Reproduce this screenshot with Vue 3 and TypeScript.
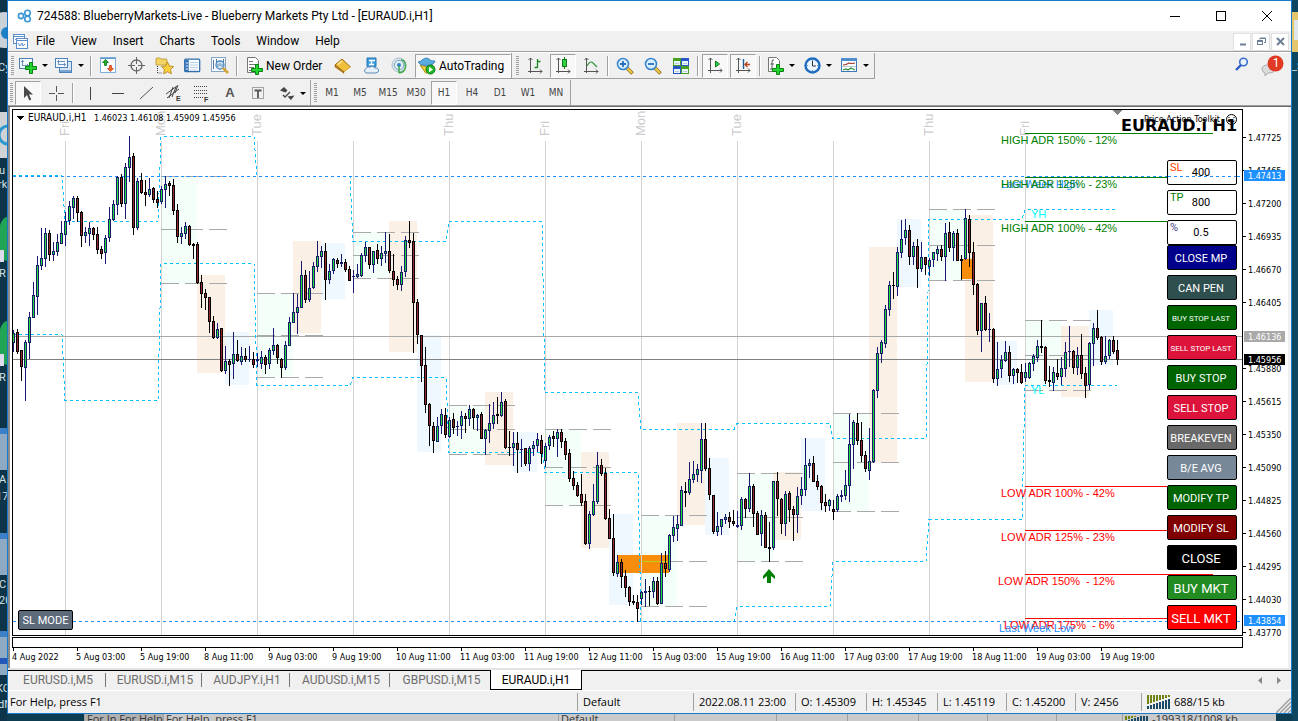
<script setup lang="ts">
interface Candle { x: number; high: number; top: number; bottom: number; low: number; up: boolean }
interface Session { x: number; y: number; w: number; h: number; kind: string }

// One entry per hourly bar: direction, high, body top, body bottom, low (chart units).
const bars = `
u330 333 343 352,d329 332 352 354,d350 350 367 381,u340 342 368 401,u312 317 343 359,u282 295 318 318,u256 265 297 315,u228 258 266 270,
u228 233 259 267,d230 233 255 261,u242 251 255 261,u234 242 252 256,u221 233 244 244,u212 221 235 246,u201 206 221 225,u196 198 208 219,
d196 198 213 222,d211 212 236 247,u227 232 236 243,u222 228 234 246,d227 228 235 240,d227 234 250 254,d246 249 254 259,u235 238 253 264,
u207 219 238 242,u200 204 220 221,u176 177 205 215,d174 177 204 207,u163 167 204 219,u136 157 168 182,d153 156 228 235,u178 181 228 230,
d173 180 193 194,d180 192 195 206,u178 189 195 197,d187 188 200 203,d191 199 203 208,u186 189 202 204,u176 184 190 208,d181 183 186 196,
d179 185 211 215,d204 210 237 243,u227 233 237 244,u222 226 234 239,d225 226 245 246,d243 244 246 259,d242 244 283 284,d275 282 294 308,
d289 293 298 310,d297 297 322 333,d316 321 338 339,u323 329 338 339,d328 328 371 372,u346 361 371 374,d359 361 365 386,u332 354 364 379,
d340 354 361 362,u347 356 362 365,d348 356 360 362,u346 359 360 362,d352 359 365 368,u353 359 361 367,u351 357 364 369,d355 357 365 374,
u348 350 364 369,u328 345 351 355,d344 345 358 364,d358 359 368 378,u341 345 368 370,u317 322 346 346,u293 312 323 323,u294 307 313 334,
u261 275 308 308,d270 275 300 303,u271 288 300 302,u262 266 288 289,u241 256 267 272,u246 251 257 268,d243 251 280 300,u264 271 280 284,
u258 259 271 274,d258 260 264 268,u254 262 264 267,d259 262 270 272,d266 269 281 281,u270 276 277 293,u264 274 277 278,u253 255 276 277,
u242 247 256 262,d247 247 265 269,u251 251 265 273,d244 250 259 264,u246 253 259 266,u232 251 254 263,d234 251 271 273,d254 271 280 286,
d276 279 285 290,u266 272 285 291,u236 240 272 277,d221 240 243 248,d233 241 303 353,d299 302 335 344,d335 335 366 382,d347 365 405 413,
d403 404 426 446,d422 426 441 453,u417 426 442 442,u409 414 426 434,d408 415 435 438,u417 420 437 438,d413 419 428 434,u421 426 427 436,
u411 416 426 439,d413 416 419 433,u405 409 419 426,d408 409 418 429,u414 415 418 431,d412 414 439 439,u429 430 439 455,u404 423 431 443,
u402 415 424 429,d397 414 416 424,u392 402 416 417,d399 401 448 449,d431 447 448 456,u432 443 448 466,d432 443 450 473,u439 449 450 467,
d448 448 464 466,u446 448 464 471,u441 445 449 456,u433 439 446 452,d435 440 454 464,u443 446 461 467,u435 437 446 450,d431 436 439 447,
u429 432 439 457,d429 432 442 448,d438 441 455 460,d449 453 479 482,d471 478 486 490,d482 485 496 497,d474 494 503 506,d494 501 544 545,
u511 514 544 549,u484 501 515 516,u452 465 502 504,d459 465 474 476,d468 473 519 520,d509 518 539 539,d514 538 573 576,u555 562 574 577,
d559 562 577 588,d570 576 588 597,d586 587 602 606,d595 601 603 605,d595 602 609 622,u591 592 599 605,u579 591 593 607,d586 591 592 606,
u577 581 592 598,d577 581 604 605,u553 563 604 604,d551 563 569 577,u534 535 570 572,u516 527 536 542,u515 524 529 541,u486 490 526 526,
d482 491 493 507,u462 479 493 495,u461 474 480 483,u464 469 475 482,u423 439 471 483,d423 439 469 471,d458 468 495 500,d495 495 532 534,
u512 526 532 536,u519 519 527 535,u514 517 520 524,d512 517 522 528,d510 521 524 526,u511 525 527 528,u497 499 526 530,d498 499 509 518,
u473 486 509 512,d484 486 514 527,d511 513 535 535,u510 515 534 546,d512 515 548 548,d522 547 549 562,u481 481 548 550,d472 481 499 516,
d498 499 524 534,u491 494 524 536,d491 493 510 522,d506 509 515 541,u487 496 515 533,u477 489 496 505,u438 465 490 496,u459 463 466 478,
d456 463 482 482,d475 481 487 490,d485 486 503 510,d494 502 506 512,u499 500 506 511,d500 509 512 520,u494 496 510 512,u490 495 497 502,
u470 485 496 500,u414 444 486 502,u420 422 445 469,d413 423 441 445,d422 440 456 462,d451 455 469 472,u428 461 471 480,u389 390 462 463,
u347 353 391 398,u340 342 354 363,u305 309 344 348,u281 285 310 316,d272 285 286 299,u247 252 287 296,u220 239 253 258,u219 230 238 245,
d225 230 257 265,u242 246 257 265,d239 246 269 288,u242 257 269 272,d257 257 265 275,u258 260 267 276,u252 252 260 267,u246 249 254 261,
d245 249 257 261,u223 233 257 281,d222 232 248 252,u231 233 248 261,d229 233 261 261,d255 259 261 280,u209 218 259 260,d215 219 253 267,
d242 252 285 295,d283 284 331 335,u303 303 331 352,d296 303 330 331,u313 329 330 342,d328 329 379 383,u342 369 379 386,u355 360 369 378,
u341 352 361 362,d346 352 376 382,u368 369 376 384,d368 369 373 383,d364 372 383 384,u363 372 378 382,u362 363 378 379,u354 356 364 371,
u340 346 358 362,d320 346 348 353,d346 347 381 384,d366 380 382 387,u367 372 383 391,d359 373 377 380,u357 368 377 385,u342 352 369 377,
u326 351 352 367,d350 351 368 374,u347 355 368 375,d334 355 374 379,d367 373 386 398,u342 343 385 390,u323 328 344 366,d310 328 338 340,
d336 337 362 365,u336 356 362 364,u339 340 356 359,d336 340 352 354,d340 350 360 365`

const candles: Candle[] = bars.trim().split(',').map((raw, i) => {
  const s = raw.trim()
  const [high, top, bottom, low] = s.slice(1).split(' ').map(Number)
  return { x: 13 + i * 4, high, top, bottom, low, up: s[0] === 'u' }
})

// Per trading day: x, asian range, asian mid, european range, american range.
const days = [
  [161, 176, 283, 229, 275, 373, 332, 385],
  [257, 293, 377, 335, 241, 333, 243, 299],
  [353, 232, 278, 255, 221, 352, 335, 452],
  [449, 405, 454, 429, 392, 465, 432, 472],
  [545, 429, 505, 467, 452, 548, 514, 605],
  [641, 515, 606, 561, 423, 525, 458, 535],
  [737, 473, 561, 517, 472, 540, 438, 511],
  [833, 413, 511, 462, 247, 462, 219, 287],
  [929, 209, 280, 245, 215, 382, 341, 385],
  [1025, 320, 390, 355, 326, 397, 310, 365],
]
const sessions: Session[] = days.flatMap(([x, a, b, , c, d, e, f]) => [
  { x, y: a, w: 36, h: b - a, kind: 'asia' },
  { x: x + 36, y: c, w: 28, h: d - c, kind: 'europe' },
  { x: x + 64, y: e, w: 24, h: f - e, kind: 'america' },
])
const ranges = days.flatMap(([x, a, b, m]) => [a, m, b].map((y) => ({ x, y })))

const stepPath = (levels: number[]): string =>
  levels.map((y, i) => {
    const start = i === 0 ? 13 : 65 + (i - 1) * 96
    const end = Math.min(62 + i * 96, 1117)
    return `${i === 0 ? 'M' : 'L'}${start} ${y}.5L${end} ${y}.5`
  }).join('')
const dayHigh = stepPath([175, 221, 136, 176, 241, 221, 392, 429, 423, 438, 219, 209])
const dayLow = stepPath([334, 400, 263, 385, 377, 452, 472, 621, 606, 561, 519, 385])

const dayNames = ['Fri', 'Mon', 'Tue', '', 'Thu', 'Fri', 'Mon', 'Tue', '', 'Thu', 'Fri']
const dayLines = dayNames.map((name, i) => ({ name, x: 65 + i * 96 }))

const prices = ['1.47725', '1.47465', '1.47200', '1.46935', '1.46670', '1.46405', '', '1.45880', '1.45615', '1.45350', '1.45090', '1.44825', '1.44560', '1.44295', '1.44030', '1.43770']
const priceTags = [
  { y: 170, text: '1.47413', kind: 'level' },
  { y: 331, text: '1.46136', kind: 'line' },
  { y: 354, text: '1.45956', kind: 'bid' },
  { y: 615, text: '1.43854', kind: 'level' },
]
const times = ['4 Aug 2022', '5 Aug 03:00', '5 Aug 19:00', '8 Aug 11:00', '9 Aug 03:00', '9 Aug 19:00', '10 Aug 11:00', '11 Aug 03:00', '11 Aug 19:00', '12 Aug 11:00', '15 Aug 03:00', '15 Aug 19:00', '16 Aug 11:00', '17 Aug 03:00', '17 Aug 19:00', '18 Aug 11:00', '19 Aug 03:00', '19 Aug 19:00']

const adr = [
  { y: 133, x: 1001, to: 1213, text: 'HIGH ADR 150% - 12%', kind: 'high' },
  { y: 177, x: 1001, to: 1167, text: 'HIGH ADR 125% - 23%', kind: 'high' },
  { y: 221, x: 1001, to: 1167, text: 'HIGH ADR 100% - 42%', kind: 'high' },
  { y: 486, x: 1001, to: 1167, text: 'LOW ADR 100% - 42%', kind: 'low' },
  { y: 530, x: 1001, to: 1167, text: 'LOW ADR 125% - 23%', kind: 'low' },
  { y: 574, x: 998, to: 1213, text: 'LOW ADR 150%\u00a0 - 12%', kind: 'low' },
  { y: 618, x: 1004, to: 1167, text: 'LOW ADR 175%\u00a0 - 6%', kind: 'low' },
]

const fields = [
  { id: 'sl', label: 'SL', value: '400' },
  { id: 'tp', label: 'TP', value: '800' },
  { id: 'pct', label: '%', value: '0.5' },
]
const actions = [
  { text: 'CLOSE MP', kind: 'navy' },
  { text: 'CAN PEN', kind: 'slate' },
  { text: 'BUY STOP LAST', kind: 'green tiny' },
  { text: 'SELL STOP LAST', kind: 'crimson tiny' },
  { text: 'BUY STOP', kind: 'green' },
  { text: 'SELL STOP', kind: 'crimson' },
  { text: 'BREAKEVEN', kind: 'gray' },
  { text: 'B/E AVG', kind: 'steel' },
  { text: 'MODIFY TP', kind: 'green' },
  { text: 'MODIFY SL', kind: 'maroon' },
  { text: 'CLOSE', kind: 'black large' },
  { text: 'BUY MKT', kind: 'forest large' },
  { text: 'SELL MKT', kind: 'red large' },
]

const menus = ['File', 'View', 'Insert', 'Charts', 'Tools', 'Window', 'Help']
const frames = ['M1', 'M5', 'M15', 'M30', 'H1', 'H4', 'D1', 'W1', 'MN']
const tabs = ['EURUSD.i,M5', 'EURUSD.i,M15', 'AUDJPY.i,H1', 'AUDUSD.i,M15', 'GBPUSD.i,M15', 'EURAUD.i,H1']
const status = ['For Help, press F1', 'Default', '2022.08.11 23:00', 'O: 1.45309', 'H: 1.45345', 'L: 1.45119', 'C: 1.45200', 'V: 2456']
const trafficBars = [0, 1, 2, 3, 4, 5, 6, 7]
</script>

<template>
  <div class="desktop">
    <svg class="edge" width="7" height="721" aria-hidden="true">
      <rect width="7" height="721" fill="#0d3448" />
      <circle cx="4" cy="30" r="18" fill="#c9d2d8" /><circle cx="7" cy="33" r="6" fill="#1d7fc4" />
      <text x="-2" y="71">Cy</text>
      <rect y="112" width="7" height="46" fill="#cfd3d6" /><circle cx="8" cy="135" r="9" fill="none" stroke="#2d9ad0" stroke-width="3" />
      <text x="-1" y="174">u</text><text x="-2" y="188">rk</text>
      <ellipse cx="7" cy="239" rx="9" ry="22" fill="#22a455" /><rect y="250" width="4" height="12" fill="#dde" />
      <text x="-1" y="277">R</text>
      <ellipse cx="7" cy="343" rx="9" ry="22" fill="#22a455" /><rect y="354" width="4" height="12" fill="#dde" />
      <text x="-1" y="381">R</text>
      <rect y="428" width="7" height="42" fill="#8da9c4" /><rect y="428" width="7" height="6" fill="#3d7fc8" />
      <text x="-1" y="483">A</text><text x="-4" y="500">17</text>
      <rect y="533" width="7" height="42" fill="#8da9c4" /><rect y="533" width="7" height="6" fill="#3d7fc8" />
      <text x="-1" y="588">C</text><text x="-1" y="604">20</text>
      <rect y="631" width="7" height="44" fill="#8da9c4" /><rect y="631" width="7" height="6" fill="#3d7fc8" /><rect y="658" width="7" height="6" fill="#2456b8" />
      <text x="-4" y="692">KC</text><text x="-2" y="708">dN</text>
    </svg>

    <main class="window">
      <header class="titlebar">
        <svg width="16" height="14" viewBox="0 0 16 14" fill="none" stroke="#3a97d3" stroke-width="1.6">
          <circle cx="10.5" cy="4" r="2.8" /><circle cx="4" cy="7" r="2.6" /><circle cx="10.5" cy="10" r="2.8" />
        </svg>
        <h1>724588: BlueberryMarkets-Live - Blueberry Markets Pty Ltd - [EURAUD.i,H1]</h1>
        <div class="winbtns">
          <button aria-label="Minimize"><svg width="12" height="12"><path d="M1 6.5h10" stroke="#000" /></svg></button>
          <button aria-label="Maximize"><svg width="12" height="12"><rect x="1.5" y="1.5" width="9" height="9" fill="none" stroke="#000" /></svg></button>
          <button aria-label="Close"><svg width="12" height="12"><path d="M1 1l10 10M11 1L1 11" stroke="#000" /></svg></button>
        </div>
      </header>

      <nav class="menubar">
        <svg class="menulogo" width="15" height="15" viewBox="0 0 15 15" fill="#fff" stroke="#5b8fcb">
          <rect x=".5" y=".5" width="11" height="9" /><path d="M.5 2.500h11M2 6l2-2 2 3 2-2" />
          <rect x="3.500" y="4.500" width="11" height="10" /><path d="M3.500 6.500h11M5 9l2 3 2-3 1 3 2-2" fill="none" />
        </svg>
        <button v-for="m in menus" :key="m">{{ m }}</button>
        <div class="mdi">
          <button aria-label="Minimize chart"><svg width="9" height="9"><path d="M2 7.500h6" stroke="#6d7f94" stroke-width="2" /></svg></button>
          <button aria-label="Restore chart"><svg width="9" height="9" fill="none" stroke="#6d7f94"><path d="M3 2.500V1h5.500v4.500H7M3 1.500h5" /><rect x=".5" y="3.500" width="5" height="4" /><path d="M1 4.500h4" /></svg></button>
          <button aria-label="Close chart"><svg width="9" height="9"><path d="M1 1l7 7M8 1L1 8" stroke="#6d7f94" stroke-width="2" /></svg></button>
        </div>
      </nav>

      <div class="toolrow first">
        <div class="strip">
          <i class="grip"></i>
          <button class="drop" aria-label="New chart">
            <svg width="18" height="17" viewBox="0 0 18 17"><rect x=".5" y="1.500" width="13" height="10" fill="#f4f9ff" stroke="#4c82b8" /><path d="M3.500 3v6M2 4.500h3M3 8.500h7M8.500 7v3" stroke="#6a92b8" fill="none" /><path d="M10.500 5.500h3v4h4v3h-4v4h-3v-4h-4v-3h4z" fill="#22d52c" stroke="#0a7f16" /></svg><b></b>
          </button>
          <button class="drop" aria-label="Profiles">
            <svg width="18" height="17" viewBox="0 0 18 17"><rect x="4.500" y="4.500" width="12" height="11" fill="#d6e6f6" stroke="#4c82b8" /><path d="M5 14h11" stroke="#79a6d3" stroke-width="2" /><rect x=".5" y="1.500" width="12" height="9" fill="#f4f9ff" stroke="#4c82b8" /><path d="M3.500 3v5M2 4.500h8M3 7.500h8M9.500 6v3" stroke="#6a92b8" fill="none" /></svg><b></b>
          </button>
          <i class="sep"></i>
          <button class="tool" aria-label="Market Watch"><svg width="17" height="17" viewBox="0 0 17 17"><rect x=".5" y=".5" width="15" height="15" fill="#fdfeff" stroke="#7fb0dc" /><path d="M1 1.500h14" stroke="#5a96d0" /><path d="M5.500 2.500l3 3h-2v3h-2v-3h-2z" fill="#1fae2a" stroke="#0d7a18" stroke-width=".8" /><path d="M10.500 14.500l3-3h-2v-3h-2v3h-2z" fill="#f2622b" stroke="#d04510" stroke-width=".8" /></svg></button>
          <button class="tool" aria-label="Data Window"><svg width="17" height="17" viewBox="0 0 17 17" fill="none" stroke="#666" stroke-width="1.3"><circle cx="8.500" cy="8.500" r="5.500" /><path d="M8.500 0v7M8.500 10v7M0 8.500h7M10 8.500h7" stroke-width="1" /></svg></button>
          <button class="tool" aria-label="Navigator"><svg width="19" height="18" viewBox="0 0 19 18"><path d="M1 2q0-1 1-1h3l1 1h5q1 0 1 1v5H1z" fill="#f3d565" stroke="#b8932b" stroke-width=".8" /><path d="M2.500 9v7h4" stroke="#444" stroke-dasharray="1 1" fill="none" /><path d="M12.500 5l1.900 4 4.200.5-3 3 .8 4.300-3.900-2-3.900 2 .8-4.300-3-3 4.200-.5z" fill="#f9cf3e" stroke="#b07e13" stroke-width=".8" /></svg></button>
          <button class="tool" aria-label="Terminal"><svg width="17" height="16" viewBox="0 0 17 16"><rect x=".7" y="1.200" width="15" height="12.500" rx="1" fill="#fafdff" stroke="#2f6eac" stroke-width="1.300" /><rect x="1.200" y="2" width="3.500" height="11" fill="#2d6fb4" /><path d="M2 5h2M2 8h2M2 11h2" stroke="#fff" /><path d="M6 4.500h8M6 7h8M6 9.500h8M6 12h8" stroke="#a7c2dd" stroke-width=".8" /></svg></button>
          <button class="tool" aria-label="Strategy Tester"><svg width="18" height="18" viewBox="0 0 18 18"><rect x=".5" y=".5" width="14" height="14" fill="#f5f9fd" stroke="#87a5c4" /><path d="M2.500 3v9M5.500 2v7M12.500 2v7" stroke="#5d7890" /><circle cx="9" cy="8" r="4" fill="#cfe5f8" fill-opacity=".9" stroke="#4a88c2" stroke-width="1.300" /><path d="M7 10V7M9 9V6M11 10V7" stroke="#4a7299" stroke-width=".8" /><path d="M12 11l5 5" stroke="#d8a42e" stroke-width="2.500" /></svg></button>
          <i class="sep"></i>
          <button class="order"><svg width="17" height="18" viewBox="0 0 17 18"><path d="M1.500.5h8l3 3v12h-11z" fill="#fff" stroke="#777" /><path d="M3 4.500h4M3 7.500h7M3 10.500h5M3 13.500h3" stroke="#777" /><path d="M9.500 7.500h3v4h4v3h-4v3h-3v-3h-4v-3h4z" fill="#24d52f" stroke="#0a7f16" /></svg>New Order</button>
          <button class="tool" aria-label="MetaEditor"><svg width="18" height="16" viewBox="0 0 18 16"><path d="M1 7l7-6 8.500 8-6.500 5z" fill="#f0bf3c" stroke="#a36b10" /><path d="M1 7v2l9 6.300V14z" fill="#c98a1b" stroke="#8a590c" stroke-width=".6" /><path d="M10 15.300l6.500-5V9L10 14z" fill="#fff3c7" /><path d="M4 6.500l4-3.500" stroke="#fff0ad" stroke-width="1.400" /></svg></button>
          <button class="tool" aria-label="Options"><svg width="17" height="17" viewBox="0 0 17 17"><path d="M4 1h9v8q0 1-1 1H5q-1 0-1-1z" fill="#3c9ee0" stroke="#2272b0" /><path d="M6 3.500h6M8.500 3v5M6 7.500h5" stroke="#fff" stroke-width="1.300" /><path d="M2 15q-1.500-2 1-3.500 1-2.500 4-1.500 3-2 5 1 4 0 3.500 3-.5 2-3 2H4q-1.500 0-2-1z" fill="#e6f0fa" stroke="#5b87b5" /></svg></button>
          <button class="tool" aria-label="Signals"><svg width="17" height="17" viewBox="0 0 17 17" fill="none"><circle cx="8" cy="8" r="7" stroke="#a9bccb" fill="#e2ecf2" /><circle cx="8" cy="8" r="4.800" stroke="#6fa5c2" /><circle cx="8" cy="8" r="2" fill="#2d86c8" /><path d="M8 16V9M8 16q7-1 6.500-8Q14 3 10 3" stroke="#48ab52" stroke-width="1.600" /></svg></button>
          <button class="auto pressed"><svg width="18" height="18" viewBox="0 0 18 18"><path d="M2 8l7 2 6-2-3 6-4 2.500z" fill="#f4cf3a" stroke="#b28a1a" /><path d="M0 5q4-1 4-2 5-4 8 0 1 1 5 1-1 4-8 4.500Q2 8.500 0 5z" fill="#5aabe0" stroke="#2b78ae" stroke-width=".8" /><circle cx="12.500" cy="12.500" r="4.500" fill="#1fb52a" stroke="#0c7c18" /><path d="M11 9.800v5.400l4-2.700z" fill="#fff" /></svg>AutoTrading</button>
          <i class="endline"></i>
          <i class="grip second"></i>
          <button class="tool" aria-label="Bar chart"><svg width="17" height="17" viewBox="0 0 17 17" fill="none"><path d="M3.500 1v15M1 14.500h14M1.500 3l2-2 2 2M13 12.500l2 2-2 2" stroke="#555" /><path d="M10.500 2v9M7.500 10.500h3M10.500 4.500h3" stroke="#1c8a26" stroke-width="1.300" /></svg></button>
          <button class="tool pressed" aria-label="Candlesticks"><svg width="17" height="17" viewBox="0 0 17 17" fill="none"><path d="M3.500 1v15M1 14.500h14M1.500 3l2-2 2 2M13 12.500l2 2-2 2" stroke="#555" /><path d="M9.500 0v12" stroke="#0f7a1a" /><rect x="7.500" y="2.500" width="4" height="7" fill="#35d143" stroke="#0f7a1a" /></svg></button>
          <button class="tool" aria-label="Line chart"><svg width="17" height="17" viewBox="0 0 17 17" fill="none"><path d="M3.500 1v15M1 14.500h14M1.500 3l2-2 2 2M13 12.500l2 2-2 2" stroke="#555" /><path d="M4 9q3-6 6-3l4 4" stroke="#35983d" stroke-width="1.200" /></svg></button>
          <i class="sep"></i>
          <button class="tool" aria-label="Zoom in"><svg width="18" height="18" viewBox="0 0 18 18"><path d="M10.500 10.500l6 6" stroke="#8d6b15" stroke-width="3.600" /><path d="M10.500 10.500l5.500 5.500" stroke="#efc84a" stroke-width="2.200" /><circle cx="7" cy="7" r="5.500" fill="#d9efff" stroke="#3a86cc" stroke-width="1.600" /><path d="M4 7h6M7 4v6" stroke="#2871ba" stroke-width="1.800" /></svg></button>
          <button class="tool" aria-label="Zoom out"><svg width="18" height="18" viewBox="0 0 18 18"><path d="M10.500 10.500l6 6" stroke="#8d6b15" stroke-width="3.600" /><path d="M10.500 10.500l5.500 5.500" stroke="#efc84a" stroke-width="2.200" /><circle cx="7" cy="7" r="5.500" fill="#d9efff" stroke="#3a86cc" stroke-width="1.600" /><path d="M4 7h6" stroke="#2871ba" stroke-width="1.800" /></svg></button>
          <button class="tool" aria-label="Tile windows"><svg width="16" height="16" viewBox="0 0 16 16" shape-rendering="crispEdges"><rect width="8" height="8" fill="#47a01f" /><rect x="8" width="8" height="8" fill="#2a55c8" /><rect y="8" width="8" height="8" fill="#2a55c8" /><rect x="8" y="8" width="8" height="8" fill="#47a01f" /><path d="M1 5h6M9 5h6M1 13h6M9 13h6" stroke="#e9f4fb" stroke-width="4" /><path d="M2 5.500h4M10 5.500h4M2 13.500h4M10 13.500h4" stroke="#b4cbdc" /></svg></button>
          <i class="sep"></i>
          <button class="tool pressed" aria-label="Auto scroll"><svg width="17" height="17" viewBox="0 0 17 17" fill="none"><path d="M3.500 1v15M1 13.500h14M1.500 3l2-2 2 2M13 11.500l2 2-2 2" stroke="#555" /><path d="M8.500 4v6l4-3z" fill="#35d143" stroke="#0f7a1a" /></svg></button>
          <button class="tool pressed" aria-label="Chart shift"><svg width="17" height="17" viewBox="0 0 17 17" fill="none"><path d="M3.500 1v15M1 13.500h14M1.500 3l2-2 2 2M13 11.500l2 2-2 2" stroke="#555" /><path d="M8.500 2v10" stroke="#1d5f95" stroke-width="1.400" /><path d="M10 7.500h5M12.500 5L10 7.500l2.500 2.500" stroke="#b8421a" stroke-width="1.300" /></svg></button>
          <i class="sep"></i>
          <button class="drop wide" aria-label="Indicators"><svg width="17" height="18" viewBox="0 0 17 18"><path d="M1.500.5h8l3 3v11h-11z" fill="#fff" stroke="#777" /><path d="M7 3q-2-1-2 2v6q0 2-2 1M3.500 7H7" stroke="#555" fill="none" /><path d="M9.500 7.500h3v4h4v3h-4v3h-3v-3h-4v-3h4z" fill="#24d52f" stroke="#0a7f16" /></svg><b></b></button>
          <button class="drop wide" aria-label="Periods"><svg width="17" height="17" viewBox="0 0 17 17"><circle cx="8.500" cy="8.500" r="7" fill="#eaf5ff" stroke="#1d6cc0" stroke-width="2.400" /><path d="M8.500 4v5h3.500" stroke="#333" fill="none" /><path d="M8.500 3v1M8.500 13v1M3 8.500h1M13 8.500h1" stroke="#69a" /></svg><b></b></button>
          <button class="drop wide" aria-label="Templates"><svg width="17" height="17" viewBox="0 0 17 17"><rect x=".5" y="1.500" width="15" height="13" fill="#fbfdff" stroke="#3f78b4" /><rect y="1" width="16" height="3" fill="#4f8fd0" /><path d="M2 8l3-.5L8 6l3 .5L14 6" stroke="#a12d1c" fill="none" stroke-width="1.200" /><path d="M1 9.500h14" stroke="#9ab" stroke-width=".6" /><path d="M2 13l3-1 2 1 3-2 4 2" stroke="#2f9338" fill="none" stroke-width="1.200" /></svg><b></b></button>
        </div>
        <div class="right">
          <button aria-label="Search"><svg width="14" height="14" viewBox="0 0 14 14" fill="none"><circle cx="8.500" cy="5" r="3.800" stroke="#3a6fd0" stroke-width="1.600" fill="#eaf2ff" /><path d="M6 8l-5 5" stroke="#2a5cc4" stroke-width="2.400" /></svg></button>
          <button class="chat" aria-label="Messages"><svg width="23" height="22" viewBox="0 0 23 22"><path d="M1 14q0-4 6-4t7 4q0 4-7 4l-3 3v-3q-3-1-3-4z" fill="#dcdcdc" stroke="#aaa" /><circle cx="14.500" cy="8.500" r="8" fill="#e03a24" /></svg><span>1</span></button>
        </div>
      </div>

      <div class="toolrow second">
        <div class="strip">
          <i class="grip"></i>
          <button class="tool pressed" aria-label="Cursor"><svg width="10" height="15" viewBox="0 0 10 15"><path d="M1 0v12l3-3 2.300 5.500 2-1L6 8.500h4z" fill="#4a4a4a" /></svg></button>
          <button class="tool" aria-label="Crosshair"><svg width="15" height="15"><path d="M7.500 0v6M7.500 9v6M0 7.500h6M9 7.500h6" stroke="#555" /></svg></button>
          <i class="sep"></i>
          <button class="tool" aria-label="Vertical line"><svg width="15" height="13"><path d="M7.500 0v13" stroke="#444" /></svg></button>
          <button class="tool" aria-label="Horizontal line"><svg width="13" height="13"><path d="M0 6.500h12" stroke="#444" /></svg></button>
          <button class="tool" aria-label="Trendline"><svg width="13" height="13"><path d="M0 12L13 0" stroke="#555" /></svg></button>
          <button class="tool" aria-label="Equidistant channel"><svg width="16" height="16"><path d="M0 9L11 1M1 13L13 4M3 13L7 2M6 12l4-10M9 8l3-8" stroke="#444" /><text x="10" y="16">E</text></svg></button>
          <button class="tool" aria-label="Fibonacci"><svg width="16" height="17"><path d="M0 1.500h14M0 5.500h14M0 8.500h14M0 12.500h9" stroke="#444" stroke-dasharray="1 1" /><text x="10" y="17">F</text></svg></button>
          <button class="tool glyph" aria-label="Text">A</button>
          <button class="tool" aria-label="Text label"><svg width="14" height="14"><rect x="1.500" y="1.500" width="11" height="11" fill="none" stroke="#555" stroke-dasharray="1 1" /><path d="M3.500 4.500h7M7 4v8" stroke="#555" stroke-width="1.800" /></svg></button>
          <button class="drop arrows" aria-label="Arrows"><svg width="15" height="13" viewBox="0 0 15 13"><path d="M4 0l3.500 3.500L5.500 5.500 0 3.500zM14.500 8.500L11 13 7.500 9.500z" fill="#444" /><path d="M3 8l2 2 5-5" stroke="#444" fill="none" stroke-width="1.300" /></svg><b></b></button>
          <i class="endline"></i>
          <i class="grip"></i>
          <button v-for="f in frames" :key="f" class="tool frame" :class="{ pressed: f === 'H1' }">{{ f }}</button>
          <i class="endline"></i>
        </div>
      </div>

      <section class="chart">
        <svg class="plot" viewBox="10 107 1278 561" preserveAspectRatio="xMinYMin meet" shape-rendering="crispEdges">
          <rect v-for="(s, i) in sessions" :key="'s' + i" :x="s.x" :y="s.y" :width="s.w" :height="s.h" :class="s.kind" />
          <rect x="617" y="555" width="52" height="18" class="zone" />
          <rect x="961" y="259" width="12" height="20" class="zone" />
          <g class="daynames">
            <text v-for="d in dayLines" :key="d.x" :transform="`translate(${d.x + 4} 136) rotate(-90)`">{{ d.name }}</text>
          </g>
          <rect v-for="d in dayLines" :key="'l' + d.x" :x="d.x" y="141" width="1" height="494" fill="#d3d3d3" />
          <line v-for="(r, i) in ranges" :key="'r' + i" :x1="r.x" :x2="r.x + 66" :y1="r.y + 0.5" :y2="r.y + 0.5" class="range" />
          <path d="M641 561.5h28" stroke="#b4d21e" />
          <path d="M13 336.5h1229" stroke="#a9a9a9" /><path d="M13 359.500h1229" stroke="#808080" />
          <path :d="dayHigh" class="steps" /><path :d="dayLow" class="steps" />
          <path d="M13 176.500h1229M13 621.500h1229" class="weekly" />
          <g v-for="c in candles" :key="c.x" :class="c.up ? 'bull' : 'bear'">
            <rect :x="c.x" :y="c.high" width="1" :height="c.low - c.high" />
            <rect :x="c.x - 1" :y="c.top" width="3" :height="c.bottom - c.top" />
            <rect v-if="c.bottom - c.top > 2" :x="c.x" :y="c.top + 1" width="1" :height="c.bottom - c.top - 2" class="core" />
          </g>
          <path d="M769 569l6 7v3l-4-3v7h-4v-7l-4 3v-3z" fill="#008000" shape-rendering="auto" />
          <g class="notes">
            <text x="1001" y="188" class="week">Last Week High</text>
            <g v-for="a in adr" :key="a.y" :class="a.kind">
              <rect x="1025" :y="a.y" :width="a.to - 1025" height="1" />
              <text :x="a.x" :y="a.y + 11">{{ a.text }}</text>
            </g>
            <text x="999" y="632" class="week">Last Week Low</text>
            <text x="1031" y="218" class="pivot">YH</text><text x="1031" y="394" class="pivot">YL</text>
          </g>
          <path d="M1113 110h9l-4.500 5z" fill="#808080" />
          <path d="M1242.500 110v525M12.500 109.500h1230M12.500 109v526M12 635.500h1231M12.500 637.500h1230v10h-1230z" stroke="#000" fill="none" />
          <path d="M16 116h8l-4 4z" />
          <g class="small">
            <text x="28" y="121" class="head">EURAUD.i,H1</text>
            <text x="94" y="121">1.46023 1.46108 1.45909 1.45956</text>
            <text x="1144" y="122">Price Action Toolkit</text>
            <g v-for="(p, i) in prices" :key="'p' + i">
              <template v-if="p"><rect x="1243" :y="137 + i * 33" width="3" height="1" /><text x="1248" :y="141 + i * 33">{{ p }}</text></template>
            </g>
            <g v-for="t in priceTags" :key="t.y" :class="'tag ' + t.kind"><rect x="1244" :y="t.y" width="41" height="11" /><text x="1248" :y="t.y + 9">{{ t.text }}</text></g>
            <g v-for="(t, i) in times" :key="t"><rect :x="13 + i * 64" y="648" width="1" height="3" /><text :x="12 + i * 64" y="660">{{ t }}</text></g>
          </g>
          <text x="1121" y="131" class="symbol">EURAUD.i H1</text>
          <g shape-rendering="auto" fill="none" stroke="#000"><circle cx="1231.500" cy="119.500" r="5" /><path d="M1229 118v-1M1234 118v-1M1228.500 121q3 2.500 6 0" /></g>
        </svg>

        <form class="panel" @submit.prevent>
          <div v-for="f in fields" :key="f.id" class="field" :class="f.id"><label :for="f.id">{{ f.label }}</label><input :id="f.id" type="text" :value="f.value" /></div>
          <button v-for="a in actions" :key="a.text" type="button" :class="a.kind">{{ a.text }}</button>
        </form>
        <button class="slmode">SL MODE</button>
      </section>

      <nav class="tabs">
        <button v-for="t in tabs" :key="t" :class="{ active: t === 'EURAUD.i,H1' }">{{ t }}</button>
        <div class="scrollers">
          <button aria-label="Scroll left"><svg width="4" height="7"><path d="M4 0v7L0 3.500z" fill="#888" /></svg></button>
          <button aria-label="Scroll right"><svg width="4" height="7"><path d="M0 0v7l4-3.500z" fill="#888" /></svg></button>
        </div>
      </nav>

      <footer class="status">
        <span v-for="s in status" :key="s">{{ s }}</span>
        <span class="traffic">
          <svg width="24" height="14" shape-rendering="crispEdges"><g v-for="b in trafficBars" :key="b"><rect :x="b * 3" y="0" width="2" :height="9 - b" fill="#6f8410" /><rect :x="b * 3" :y="11 - b" width="2" :height="3 + b" fill="#1b4a66" /></g></svg>
          688/15 kb
        </span>
        <svg class="resize" width="15" height="15"><path d="M0 15L15 0M4 15L15 4M8 15l7-7M12 15l3-3" stroke="#a0a0a0" stroke-width="1.500" /></svg>
      </footer>
    </main>

    <svg class="edge" width="6" height="721" aria-hidden="true">
      <rect width="6" height="721" fill="#0d465e" /><rect y="12" width="6" height="40" fill="#e3c66b" /><rect x="2" y="20" width="4" height="20" fill="#dfe7ea" /><text x="0" y="70">_S</text>
    </svg>

    <div class="behind" aria-hidden="true">
      <span class="dim">For In For Help,</span><span>For Help, press F1</span><span>Default</span><span></span><span></span><span></span><span></span><span></span><span></span>
      <span><svg width="24" height="7" shape-rendering="crispEdges"><g v-for="b in trafficBars" :key="b"><rect :x="b * 3" y="0" width="2" :height="Math.max(0, 4 - b)" fill="#6f8410" /><rect :x="b * 3" :y="Math.max(0, 5 - b)" width="2" height="7" fill="#1b4a66" /></g></svg>-199318/1008 kb</span>
    </div>
  </div>
</template>

<style>
html, body { margin: 0; background: #0d3b50; }
</style>

<style scoped>
.desktop { display: grid; grid-template-columns: 7px minmax(0, 1fr) 6px; grid-template-rows: minmax(0, 1fr) 7px; height: 100vh; overflow: hidden; background: #0d3b50; font: 12px/16px Roboto, "Open Sans", sans-serif; color: #000; }
.edge { grid-row: 1 / 3; font-size: 11px; fill: #d5e0e6; }
.desktop > .edge:first-child { grid-column: 1; }
button { font: inherit; color: inherit; background: none; border: 0; padding: 0; margin: 0; border-radius: 0; white-space: nowrap; }
.window { grid-column: 2; grid-row: 1; display: flex; flex-direction: column; border: 1px solid #1979ca; background: #f0f0f0; min-height: 0; box-sizing: border-box; }

.titlebar { flex: none; display: flex; align-items: center; height: 30px; background: #fff; padding-left: 9px; }
.titlebar h1 { margin: 0 0 0 4px; font-size: 12px; font-weight: 400; flex: 1; white-space: nowrap; }
.winbtns { display: flex; height: 100%; }
.winbtns button { width: 46px; display: grid; place-items: center; padding: 0 2px 1px 0; }

.menubar { flex: none; display: flex; align-items: center; height: 22px; box-sizing: border-box; border-bottom: 1px solid #fff; box-shadow: inset 0 -1px #a0a0a0; padding-left: 5px; }
.menubar > button { padding: 0 8px 1px; }
.mdi { margin-left: auto; display: flex; gap: 1px; padding-right: 2px; }
.mdi button { width: 18px; height: 18px; box-sizing: border-box; border: 1px solid #e0e0e0; background: #fff; display: grid; place-items: center; }

.toolrow { flex: none; display: flex; justify-content: space-between; }
.toolrow.first { height: 26px; }
.toolrow.second { height: 28px; box-sizing: border-box; border-bottom: 1px solid #696969; box-shadow: inset 0 -1px #a0a0a0; }
.strip { display: flex; align-items: center; box-sizing: border-box; }
.first .strip { border-bottom: 1px solid #a0a0a0; border-right: 1px solid #a0a0a0; }
.second .strip { padding-top: 1px; }
.grip { flex: none; width: 8px; height: 20px; background: repeating-linear-gradient(#a0a0a0 0 1px, transparent 1px 2px) 3px 0 / 3px 100% no-repeat; }
.grip.second { margin-left: 1px; }
.second .grip { width: 6px; background-position: 2px 0; }
.endline + .grip { margin-left: 1px; }
.sep { flex: none; width: 1px; height: 20px; margin: 0 2px; background: #a0a0a0; border-right: 1px solid #fff; }
.endline { flex: none; align-self: stretch; width: 1px; background: #a0a0a0; }
.tool { flex: none; width: 26px; height: 24px; margin: 0 1px; box-sizing: border-box; display: grid; place-items: center; }
.pressed { border: 1px solid; border-color: #a0a0a0 #fff #fff #a0a0a0; background: #f8f8f8; }
.drop { flex: none; width: 36px; height: 24px; display: flex; align-items: center; gap: 5px; padding-left: 3px; }
.drop.wide { width: 37px; padding-left: 4px; }
.drop.arrows { width: 38px; padding-left: 8px; }
.drop b { width: 0; height: 0; border: 3px solid transparent; border-top-color: #000; border-bottom: 0; }
.order { width: 89px; height: 24px; padding-left: 6px; display: flex; align-items: center; gap: 3px; }
.auto { width: 96px; height: 24px; margin-left: 2px; box-sizing: border-box; display: flex; align-items: center; gap: 3px; padding-left: 2px; }
.glyph { font: bold 13px/16px "Liberation Sans", sans-serif; color: #555; }
.frame { font: 10px/16px "DejaVu Sans Condensed", sans-serif; color: #444; }
.tool text { font: bold 7px "Liberation Sans", sans-serif; fill: #333; }
.right { display: flex; align-items: center; gap: 12px; padding-right: 7px; }
.chat { position: relative; display: flex; }
.chat span { position: absolute; right: 0; top: 0; width: 16px; text-align: center; color: #fff; }

.chart { flex: 1; min-height: 0; position: relative; background: #fff; border-left: 2px solid #8a8a8a; border-right: 3px solid #f0f0f0; }
.plot { display: block; width: 100%; height: 100%; }
.asia { fill: #f5fffa; }
.europe { fill: #faf0e6; }
.america { fill: #f0f8ff; }
.zone { fill: #f78d0a; }
.range { stroke: #a9a9a9; stroke-dasharray: 18 6; }
.steps { fill: none; stroke: #00bfff; stroke-dasharray: 3 3; }
.weekly { stroke: #1e90ff; stroke-dasharray: 3 3; }
.bull { fill: #191970; }
.bear { fill: #000; }
.bull .core { fill: #20e038; }
.bear .core { fill: #962828; }
.daynames { font: 13px "Liberation Sans", sans-serif; fill: #ccc; }
.notes { font: 11px "Liberation Sans", sans-serif; }
.high { fill: #008000; }
.low { fill: #f00; }
.week { fill: #1e90ff; }
.pivot { fill: #0ff; }
.small { font: 9px "DejaVu Sans Condensed", sans-serif; }
.small .head { font-size: 10px; }
.tag text { fill: #fff; }
.tag.level rect { fill: #1e90ff; }
.tag.line rect { fill: #a9a9a9; }
.symbol { font: bold 16px "DejaVu Sans", sans-serif; }

.panel { position: absolute; top: 53px; right: 51px; width: 70px; display: flex; flex-direction: column; gap: 5px; font: 11px/13px Roboto, "Liberation Sans", sans-serif; }
.field { position: relative; height: 25px; }
.field label { position: absolute; left: 3px; top: 1px; color: #ff4500; }
.field.tp label { color: #008000; }
.field.pct label { color: #483d8b; }
.field input { width: 70px; height: 25px; box-sizing: border-box; border: 1px solid #000; border-radius: 2px; background: #fff; padding: 0 2px 0 0; text-align: center; font: 11px/13px Roboto, sans-serif; color: #000; }
.field.sl input { background: #fff repeating-linear-gradient(90deg, #1e90ff 0 3px, transparent 3px 6px) 0 15px / 100% 1px no-repeat; }
.panel button { height: 25px; box-sizing: border-box; border: 1px solid #000; border-radius: 2px; color: #fff; padding: 1px 2px 0 0; }
.panel .navy { background: #00008b; margin-top: -5px; }
.panel .slate { background: #2f4f4f; }
.panel .green { background: #006400; }
.panel .crimson { background: #dc143c; }
.panel .gray { background: #696969; }
.panel .steel { background: #778899; }
.panel .maroon { background: #800000; }
.panel .black { background: #000; }
.panel .forest { background: #228b22; }
.panel .red { background: #f00; }
.panel .tiny { font-size: 8px; }
.panel .large { font-size: 13px; }
.slmode { position: absolute; left: 8px; bottom: 38px; width: 55px; height: 20px; border: 1px solid #000; border-radius: 2px; background: #5c6a7a; color: #fff; font: 11px/13px Roboto, "Liberation Sans", sans-serif; }

.tabs { flex: none; height: 23px; box-sizing: border-box; display: grid; grid-template-columns: 98px 96px 88px 100px 100px 92px 1fr; border-top: 2px solid #e3e3e3; box-shadow: inset 0 1px #000, inset 0 -1px #fff; color: #6d6d6d; }
.tabs > button { height: 14px; margin-top: 3px; line-height: 14px; border-right: 1px solid #777; padding-left: 3px; }
.tabs > button:nth-child(5) { border-right: 0; }
.tabs > button.active { margin: 0; padding: 0; height: 20px; border: 1px solid #000; border-top: 0; background: #fff; color: #000; }
.scrollers { display: flex; gap: 15px; justify-content: flex-end; align-items: center; padding-right: 10px; }
.scrollers button { display: flex; }

.status { flex: none; height: 22px; display: grid; grid-template-columns: 1fr 116px 102px 71px 71px 69px 69px 66px 150px; align-items: center; position: relative; white-space: nowrap; font: 11px/18px "Open Sans", sans-serif; }
.status span { border-left: 1px solid #a0a0a0; padding-left: 5px; line-height: 18px; }
.status span:first-child { border-left: 0; padding-left: 2px; }
.traffic { display: flex; align-items: center; gap: 3px; }
.resize { position: absolute; right: 0; bottom: 0; }

.behind { grid-column: 2; grid-row: 2; margin: 0 16px 0 77px; background: #cacaca; display: grid; grid-template-columns: 79px 395px 116px 102px 71px 71px 69px 69px 66px 1fr; align-items: end; overflow: hidden; white-space: nowrap; font: 11px/10px "Open Sans", sans-serif; color: #333; }
.behind span { border-left: 1px solid #a0a0a0; padding-left: 2px; height: 10px; line-height: 10px; overflow: hidden; }
.behind .dim { background: #b0b0b0; }
.behind svg { margin-right: 3px; }
</style>
